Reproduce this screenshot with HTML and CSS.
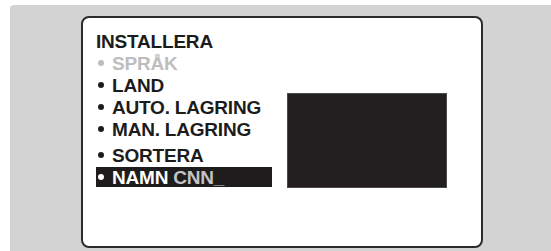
FILE: index.html
```html
<!DOCTYPE html>
<html>
<head>
<meta charset="utf-8">
<link rel="stylesheet" href="styles.css">
</head>
<body>
<div class="stage">
  <div class="screen">
    <div class="menu">
      <div class="title">INSTALLERA</div>
      <div class="item disabled"><span class="dot"></span>SPRÅK</div>
      <div class="item"><span class="dot"></span>LAND</div>
      <div class="item"><span class="dot"></span>AUTO. LAGRING</div>
      <div class="item"><span class="dot"></span>MAN. LAGRING</div>
      <div class="item spaced"><span class="dot"></span>SORTERA</div>
      <div class="item selected"><span class="dot"></span>NAMN <span class="value">CNN_</span></div>
    </div>
    <div class="preview"></div>
  </div>
</div>
</body>
</html>
```

FILE: styles.css
```css
html, body {
  margin: 0;
  padding: 0;
  background: #ffffff;
}
body {
  width: 551px;
  height: 251px;
  overflow: hidden;
  font-family: "Liberation Sans", Arial, sans-serif;
}
.stage {
  margin: 5px 0 0 10px;
  height: 246px;
  background: #d3d3d3;
  border-top-left-radius: 4px;
  padding: 11px 0 0 71px;
  box-sizing: border-box;
}
.screen {
  width: 402px;
  height: 232px;
  box-sizing: border-box;
  border: 2px solid #2b2b2b;
  border-radius: 8px;
  background: #ffffff;
  padding: 13px 0 0 13px;
  display: flex;
  align-items: flex-start;
  gap: 15px;
}
.menu {
  width: 176px;
  font-size: 19px;
  font-weight: bold;
  line-height: 22px;
  letter-spacing: -0.2px;
  color: #1c1c1c;
}
.title {
  height: 22px;
}
.item {
  height: 22px;
  white-space: nowrap;
  display: flex;
  align-items: baseline;
}
.dot {
  display: inline-block;
  width: 6px;
  height: 6px;
  border-radius: 50%;
  background: #1c1c1c;
  margin: 0 8px 0 2px;
  align-self: center;
  position: relative;
  top: -1px;
}
.disabled {
  color: #bdbdbd;
}
.disabled .dot {
  background: #bdbdbd;
}
.spaced {
  margin-top: 4px;
}
.selected {
  height: 20px;
  background: #1e1c1c;
  color: #ffffff;
}
.selected .dot {
  background: #ffffff;
  top: 0;
}
.value {
  color: #c4c4c4;
  margin-left: 5px;
}
.preview {
  width: 160px;
  height: 95px;
  margin-top: 62px;
  background: #231f20;
  border: 1px solid #4a4a4a;
  box-sizing: border-box;
}
```
